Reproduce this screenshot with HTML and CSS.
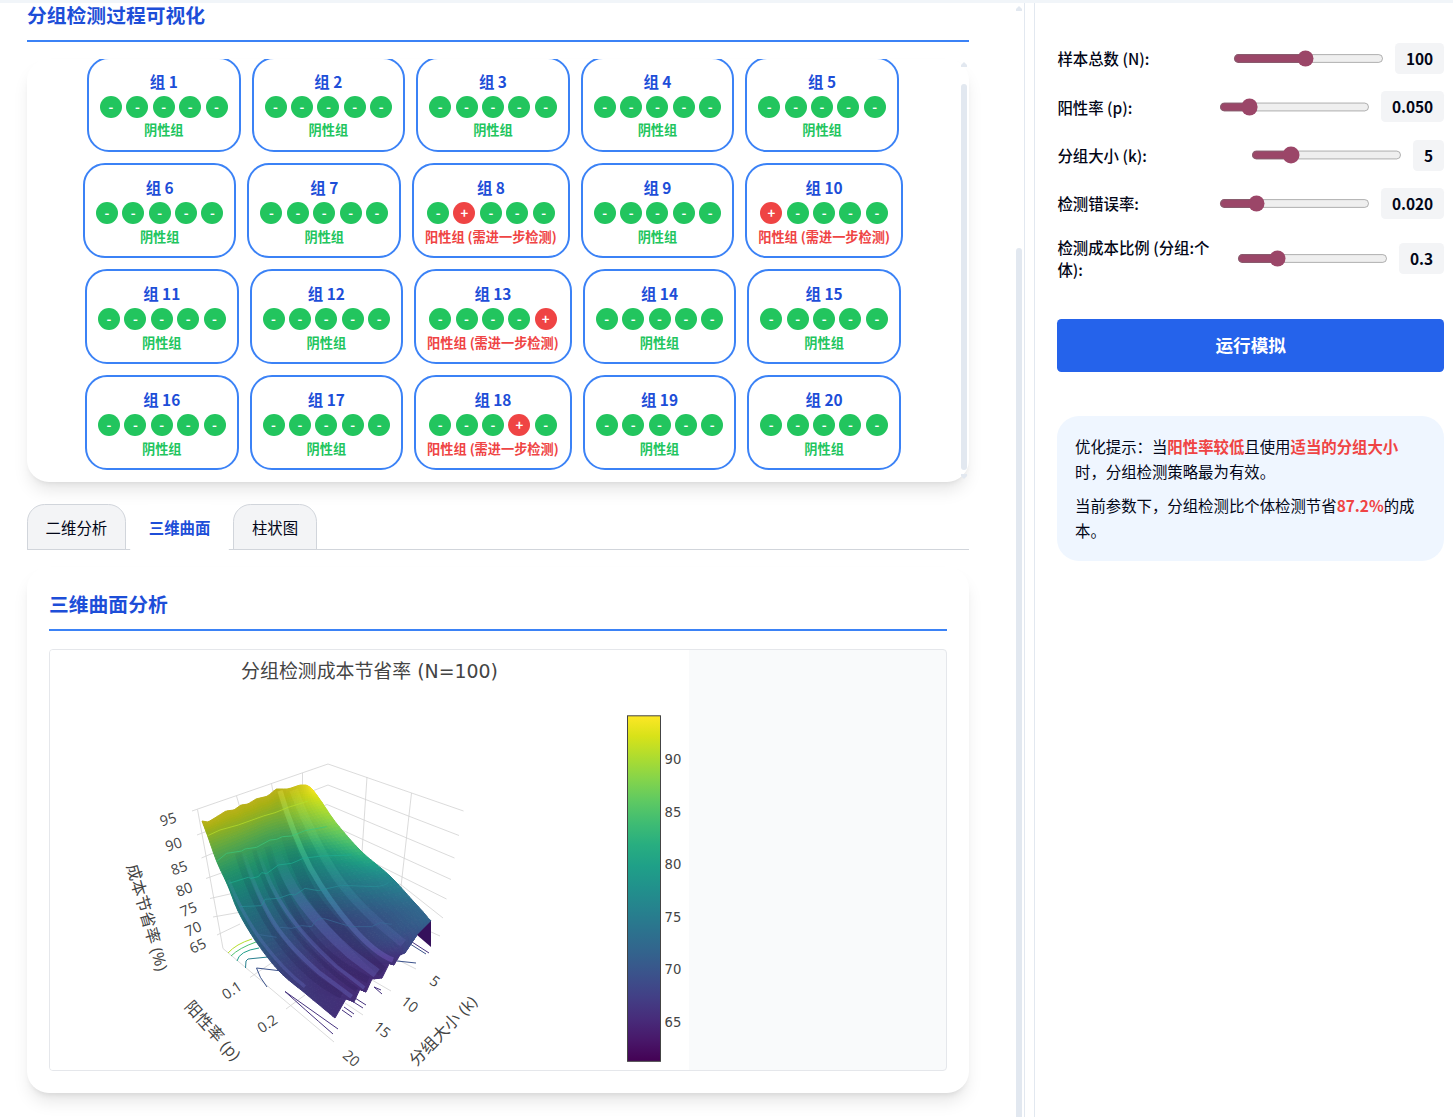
FILE: index.html
```html
<!DOCTYPE html>
<html lang="zh-CN">
<head>
<meta charset="utf-8">
<title>分组检测</title>
<link rel="stylesheet" href="styles.css">
</head>
<body>
<div class="topbar"></div>
<div class="layout">
  <main class="main">
    <div class="content">
      <h2 class="heading">分组检测过程可视化</h2>
      <section class="viewer">
        <div class="groups" id="groups"></div>
        <div class="bar"><i class="arrow"></i><i class="thumb"></i><i class="arrow down"></i></div>
      </section>
      <nav class="tabs">
        <a class="tab">二维分析</a><a class="tab active">三维曲面</a><a class="tab">柱状图</a>
      </nav>
      <section class="panel">
        <h2 class="heading">三维曲面分析</h2>
        <div class="chart">
          <svg class="plot" viewBox="50 650 639 420" width="639" height="420">
            <defs>
              <linearGradient id="viridis" x1="0" y1="1" x2="0" y2="0">
                <stop offset="0" stop-color="#440154"/><stop offset=".0627" stop-color="#48186a"/><stop offset=".1255" stop-color="#472d7b"/><stop offset=".1882" stop-color="#424086"/><stop offset=".251" stop-color="#3b528b"/><stop offset=".3137" stop-color="#33638d"/><stop offset=".3765" stop-color="#2c728e"/><stop offset=".4392" stop-color="#26828e"/><stop offset=".502" stop-color="#21918c"/><stop offset=".5647" stop-color="#1fa088"/><stop offset=".6275" stop-color="#28ae80"/><stop offset=".6902" stop-color="#3fbc73"/><stop offset=".7529" stop-color="#5ec962"/><stop offset=".8157" stop-color="#84d44b"/><stop offset=".8784" stop-color="#addc30"/><stop offset=".9412" stop-color="#d8e219"/><stop offset="1" stop-color="#fde725"/>
              </linearGradient>
              <linearGradient id="fade" gradientUnits="userSpaceOnUse" x1="0" y1="200" x2="0" y2="380">
                <stop offset="0" stop-color="#6cc8c8" stop-opacity="0"/><stop offset="1" stop-color="#7f8cf0" stop-opacity="1"/>
              </linearGradient>
              <linearGradient id="shadow" gradientUnits="userSpaceOnUse" x1="0" y1="120" x2="0" y2="420">
                <stop offset="0" stop-color="#0a1838" stop-opacity="0"/><stop offset="1" stop-color="#1a1040" stop-opacity=".16"/>
              </linearGradient>
              <linearGradient id="glow" gradientUnits="userSpaceOnUse" x1="0" y1="20" x2="0" y2="550">
                <stop offset="0" stop-color="#fff04a"/><stop offset=".3" stop-color="#6cffa0"/><stop offset=".6" stop-color="#58c8e8"/><stop offset="1" stop-color="#9a6cf0"/>
              </linearGradient>
            </defs>
            <text class="plot-title" x="369.5" y="678" text-anchor="middle">分组检测成本节省率 (N=100)</text>
            <g class="grid">
              <path d="M192 811L328 764L463.500 811M197 835L328 785L459 835.500M201.500 858L327 804.500L454.500 858M206 878.500L342 830L451 879.500M210 898.500L372 862L446.500 899M213 917L400 884L443 918M217 935L240 924M420 927L440 936"/>
              <path d="M197.500 809.500L223 948.500L334 1042M236.500 796L240 808M271.500 783.500L273 792M302.500 773L302.500 786M367 777L362 852M411.500 793L400.500 891"/>
              <path d="M250 977.500L276 960M286 1009L305 995M398 960L416 969M372 980L391 991M345 1003L363 1015"/>
            </g>
            <g class="floor">
              <path stroke="#b5de2b" d="M228 953Q236 944 252 939"/>
              <path stroke="#4ac16d" d="M231 956Q239 948 256 942"/>
              <path stroke="#1f9e89" d="M237 961Q239 951 259 948"/>
              <path stroke="#277f8e" d="M245.500 968L246 961L248 959L268 957"/>
              <path stroke="#3b528b" d="M267 987Q259 977 256.500 968L282 971M411 944.500L426 954M397 961L416 963"/>
              <path stroke="#46327e" d="M333 1034Q302 1007 285 991.500L338 1029M412 942L429 953M374 987L382 994M374 987L381 990M355 998L366 1005M352 1001L363 1008M344 1007L354 1014M342 1010L352 1017"/>
            </g>
            <g id="surface"></g>
            <path fill="#35105b" d="M431 921L431 947L417 935Z"/>
            <g transform="translate(195 780) scale(.3333)">
              <g class="dark">
                <path stroke-width="34" d="M262 120Q290 240 350 345Q430 455 562 575"/>
                <path stroke-width="22" d="M218 200Q250 320 320 430T520 600"/>
                <path stroke-width="14" d="M178 210Q212 340 290 445T486 630"/>
                <path stroke-width="22" d="M130 220Q170 360 250 475T440 645"/>
              </g>
              <g class="light">
                <path stroke="url(#glow)" opacity=".28" stroke-width="16" d="M255 32Q295 165 345 262Q400 360 470 440T594 540"/>
                <path stroke="url(#glow)" opacity=".12" stroke-width="26" d="M296 30Q360 195 425 290T625 490"/>
                <path stroke="url(#fade)" opacity=".22" stroke-width="30" d="M235 190Q265 290 325 370T465 520L545 580"/>
                <path stroke="url(#fade)" opacity=".24" stroke-width="11" d="M190 215Q222 318 275 395T425 560L508 624"/>
                <path stroke="url(#fade)" opacity=".24" stroke-width="13" d="M145 220Q180 330 225 410T375 580L470 650"/>
                <path stroke="url(#fade)" opacity=".2" stroke-width="10" d="M100 300Q145 410 205 490T330 620"/>
              </g>
              <g class="surface-lines">
                <path stroke="#b9e02c" d="M38 167L75 150L130 135L205 108L240 98L280 82L340 63"/>
                <path stroke="#3cc87c" d="M64 245L95 220L140 213L150 207L185 202L225 180L245 178L262 170L290 168L330 152L395 140"/>
                <path stroke="#1fae92" d="M102 310L160 292L168 295L190 290L200 278L215 281L250 255L290 250L325 235L380 228L470 225"/>
                <path stroke="#278f98" d="M135 380L200 377L210 358L250 355L285 343L300 345L330 325L370 332L440 316L540 320Q570 318 580 308"/>
                <path stroke="#3a6a98" d="M180 462L245 472M255 442L290 445L320 437L350 440Q365 412 385 415L440 432L470 440L530 440L555 428L590 433"/>
              </g>
            </g>
            <g class="ticks3d">
              <text transform="translate(168 819) rotate(-16)">95</text>
              <text transform="translate(173.500 844) rotate(-18)">90</text>
              <text transform="translate(179 867.500) rotate(-19)">85</text>
              <text transform="translate(184 889) rotate(-21)">80</text>
              <text transform="translate(188.500 909) rotate(-22)">75</text>
              <text transform="translate(193 928.500) rotate(-24)">70</text>
              <text transform="translate(197.500 945.500) rotate(-26)">65</text>
              <text transform="translate(231.500 990) rotate(-34)">0.1</text>
              <text transform="translate(267 1023.500) rotate(-34)">0.2</text>
              <text transform="translate(435 981) rotate(36)">5</text>
              <text transform="translate(410 1004) rotate(37)">10</text>
              <text transform="translate(382.500 1029.500) rotate(39)">15</text>
              <text transform="translate(351.500 1058) rotate(41)">20</text>
              <text class="axis" transform="translate(147.500 917.500) rotate(74)">成本节省率 (%)</text>
              <text class="axis" transform="translate(213 1030.500) rotate(48)">阳性率 (p)</text>
              <text class="axis" transform="translate(443 1030.500) rotate(-46)">分组大小 (k)</text>
            </g>
            <rect x="627.500" y="715.800" width="33" height="345.500" fill="url(#viridis)" stroke="#444"/>
            <g class="scale">
              <text x="664.500" y="764">90</text><text x="664.500" y="817">85</text><text x="664.500" y="869">80</text><text x="664.500" y="922">75</text><text x="664.500" y="974">70</text><text x="664.500" y="1027">65</text>
            </g>
          </svg>
        </div>
      </section>
    </div>
    <div class="bar page-bar"><i class="arrow"></i><i class="thumb"></i></div>
  </main>
  <aside class="side">
    <div class="row"><label class="name">样本总数 (N):</label><div class="control"><input class="range" type="range" min="0" max="1000" value="475"><span class="value">100</span></div></div>
    <div class="row"><label class="name">阳性率 (p):</label><div class="control"><input class="range" type="range" min="0" max="1000" value="161"><span class="value">0.050</span></div></div>
    <div class="row"><label class="name">分组大小 (k):</label><div class="control"><input class="range" type="range" min="0" max="1000" value="230"><span class="value">5</span></div></div>
    <div class="row"><label class="name">检测错误率:</label><div class="control"><input class="range" type="range" min="0" max="1000" value="215"><span class="value">0.020</span></div></div>
    <div class="row"><label class="name">检测成本比例 (分组:个体):</label><div class="control"><input class="range" type="range" min="0" max="1000" value="237"><span class="value">0.3</span></div></div>
    <button class="run">运行模拟</button>
    <div class="tip">
      <p>优化提示：当<b>阳性率较低</b>且使用<b>适当的分组大小</b>时，分组检测策略最为有效。</p>
      <p>当前参数下，分组检测比个体检测节省<b>87.2%</b>的成本。</p>
    </div>
  </aside>
</div>
<script src="app.js"></script>
</body>
</html>
```
FILE: styles.css
```css
* { box-sizing: border-box; }
body { margin: 0; height: 1117px; overflow: hidden; background: #fff; color: #020617; font: 15.4px/1.6 "Noto Sans CJK SC", sans-serif; }
.topbar { height: 3px; background: #f1f5f9; }
.layout { display: flex; gap: 9px; height: 1114px; }
.main { width: 1025px; flex: none; display: flex; justify-content: space-between; border-right: 1px solid #e2e8f0; overflow: hidden; }
.content { width: 942px; margin-left: 27px; flex: none; }
.heading { margin: 0; font-size: 19.8px; font-weight: 600; line-height: 30px; color: #1d4ed8; border-bottom: 2px solid #3b82f6; }
.content > .heading { height: 39px; line-height: 24px; }
.viewer { display: flex; height: 423px; margin-top: 17px; border-radius: 22px; box-shadow: 0 11px 16.5px -3.3px rgba(0,0,0,.1), 0 4.4px 6.6px -4.4px rgba(0,0,0,.1); }
.groups { flex: 1; display: flex; flex-wrap: wrap; align-content: flex-start; justify-content: center; gap: 11px; padding: 0 11.2px 0 11px; margin-top: -2.4px; clip-path: inset(2.4px 0 0 0); }
.group { height: 95.2px; padding: 11px; border: 2px solid #3b82f6; border-radius: 22px; text-align: center; background: #fff; }
.group-name { height: 26.2px; line-height: 22.6px; font-weight: 600; color: #1d4ed8; }
.samples { display: flex; justify-content: center; gap: 4.4px; }
.sample { width: 22px; height: 22px; border-radius: 50%; background: #22c55e; color: #fff; font-size: 13.2px; font-weight: 700; line-height: 22px; }
.sample.positive { background: #ef4444; }
.status { margin-top: 3.6px; font-size: 13.2px; font-weight: 700; line-height: 17px; color: #22c55e; }
.status.positive { color: #ef4444; }
.bar { width: 10px; display: flex; flex-direction: column; align-items: center; padding: 3px 0; }
.arrow { width: 6px; height: 5px; background: #e2e8f0; clip-path: polygon(50% 0, 100% 60%, 100% 100%, 0 100%, 0 60%); flex: none; }
.down { transform: rotate(180deg); }
.thumb { width: 6px; flex: 1; margin: 17px 0 4px; border-radius: 3px; background: #e2e8f0; }
.page-bar .thumb { margin: 237px 0 -10px; }
.tabs { display: flex; gap: 4.4px; margin-top: 22px; height: 46px; box-shadow: inset 0 -1px #d1d5db; }
.tab { padding: 0 17.6px; border: 1px solid #d1d5db; border-radius: 17.6px 17.6px 0 0; background: #f3f4f6; line-height: 44px; }
.tab.active { border-color: #fff; background: #fff; color: #1d4ed8; font-weight: 700; }
.panel { height: 526px; margin-top: 17px; padding: 22px 22px 0; border-radius: 22px; box-shadow: 0 11px 16.5px -3.3px rgba(0,0,0,.1), 0 4.4px 6.6px -4.4px rgba(0,0,0,.1); }
.panel .heading { height: 42px; }
.chart { height: 422px; margin-top: 18px; border: 1px solid #e5e7eb; border-radius: 4px; background: #f9fafb; overflow: hidden; }
.plot { display: block; background: #fff; }
.plot text { fill: #444; font-family: "DejaVu Sans", "Noto Sans CJK SC", sans-serif; }
.plot .plot-title { font-size: 18.9px; }
.plot .ticks3d text { font: 14.5px "Open Sans", "Noto Sans CJK SC", sans-serif; text-anchor: middle; dominant-baseline: central; }
.plot .ticks3d .axis { font-size: 16.2px; letter-spacing: .3px; }
.plot .scale text { font-size: 13.2px; }
.grid { fill: none; stroke: #d2d2d2; stroke-width: .8; }
.floor { fill: none; stroke-width: 1; }
.dark, .light { fill: none; }
.dark { stroke: url(#shadow); }
.surface-lines { fill: none; stroke-width: 3; opacity: .7; }
.side { flex: 1; min-width: 0; border-left: 1px solid #e2e8f0; padding: 40px 9px 0 22.4px; }
.row { display: flex; align-items: center; justify-content: space-between; margin-bottom: 17.6px; min-height: 30.8px; }
.name { width: 156px; font-weight: 500; line-height: 22px; margin-top: -.4px; }
.control { display: flex; align-items: center; gap: 11px; }
.range { zoom: 1.1; width: 137.3px; margin: 0; accent-color: #9b4668; }
.value { height: 30.8px; padding: 0 10.8px; border-radius: 4.4px; background: #f3f4f6; font-weight: 600; line-height: 31px; }
.run { display: block; width: 100%; height: 53px; margin-top: 39px; padding: 0 0 1.5px; border: 0; border-radius: 4.4px; background: #2563eb; color: #fff; font: 700 17.6px "Noto Sans CJK SC", sans-serif; }
.tip { margin-top: 44px; padding: 17.4px 17.6px 17.8px; border-radius: 22px; background: #eff6ff; line-height: 25.2px; }
.tip p { margin: 0 0 8.6px; }
.tip p:last-child { margin: 0; }
.tip b { color: #ef4444; font-weight: 700; }
```
FILE: app.js
```js
// Group cards: index of the positive sample for each positive group.
const positives = { 8: 1, 10: 0, 13: 4, 18: 3 };
let cards = '';
for (let n = 1; n <= 20; n++) {
  const hit = positives[n];
  let samples = '';
  for (let i = 0; i < 5; i++) samples += `<span class="sample${i === hit ? ' positive' : ''}">${i === hit ? '+' : '-'}</span>`;
  cards += `<div class="group"><div class="group-name">组 ${n}</div><div class="samples">${samples}</div>` +
    (hit === undefined ? '<div class="status">阴性组</div>' : '<div class="status positive">阳性组 (需进一步检测)</div>') + '</div>';
}
document.getElementById('groups').innerHTML = cards;

// Surface mesh: rows follow the infection rate, columns follow the group size.
const rows = [
  [[202,821],[230,809],[258,797],[276,789],[313,790]],
  [[208,837],[238,826],[265,815],[289,808],[321,801]],
  [[217,862],[245,850],[275,838],[303,832],[337,824]],
  [[228,886],[252,877],[282,864],[318,857],[362,852]],
  [[239,913],[264,905],[296,891],[337,886],[390,876]],
  [[257,943],[281,934],[312,919],[361,917],[414,902]],
  [[280,972],[306,962],[336,949],[382,940],[424,913]],
  [[306,994],[330,982],[354,965],[392,953],[428,918]],
  [[335,1018],[354,1001],[372,979],[394,965],[431,921]]
];
const levels = [
  [93.5,93.5,93.5,93.5,94],[90,90,90,90,91.5],[85,85,85,86,88],[80,80,80,80,83],[76,75,75,75,77],
  [72,71,70,70,73],[68.5,67.5,67,69,72],[67,66,66,67,72],[66,65.5,65.5,66.5,71]
];
const ramp = ['440154','48186a','472d7b','424086','3b528b','33638d','2c728e','26828e','21918c','1fa088','28ae80','3fbc73','5ec962','84d44b','addc30','d8e219','fde725']
  .map(h => [0, 2, 4].map(i => parseInt(h.substr(i, 2), 16)));
const spline = (v, u) => {
  const n = v.length - 1, i = Math.min(n - 1, Math.floor(u)), f = u - i;
  const a = v[Math.max(0, i - 1)], b = v[i], c = v[i + 1], d = v[Math.min(n, i + 2)];
  return b + .5 * f * (c - a + f * (2 * a - 5 * b + 4 * c - d + f * (3 * (b - c) + d - a)));
};
const back = [[202,821],[208,822],[218,816],[226,811],[234,810],[241,805],[248,804],[256,799],[268,796],[276,789],[288,789],[300,785],[306,785],[310,787],[313,790]];
const front = [[335,1018],[347,997],[354,1002],[360,989],[366,992],[372,979],[382,978],[390,962],[394,965],[400,955],[405,953],[417,935],[431,921]];
const along = (pts, s, k) => spline(pts.map(p => p[k]), s * (pts.length - 1));
const lin = (pts, s, k) => { const x = s * (pts.length - 1), i = Math.min(pts.length - 2, Math.floor(x)); return pts[i][k] + (x - i) * (pts[i + 1][k] - pts[i][k]); };
const S = 48, T = 72;
const mesh = [];
for (let i = 0; i <= S; i++) {
  const s = i / S;
  const guide = [0, 1].map(k => {
    const line = rows.map(r => along(r, s, k));
    line[0] = lin(back, s, k);
    line[8] = lin(front, s, k);
    return line;
  });
  mesh.push(Array.from({ length: T + 1 }, (_, j) => guide.map(line => spline(line, j / T * 8).toFixed(1)).join(' ')));
}
// Shading: the slope faces away on the large-group side and catches light near k = 1.
const shadeAt = (s, t) => {
  const lit = Math.max(0, Math.min(1, (s - .66) / .3));
  return .77 + .22 * lit + .18 * t * (1 - lit);
};
let out = '';
for (let i = 0; i < S; i++) for (let j = 0; j < T; j++) {
  const s = (i + .5) / S, t = (j + .5) / T;
  const value = spline(levels.map(r => spline(r, s * 4)), t * 8);
  const u = Math.max(0, Math.min(15.99, (value - 61.3) / 32.8 * 16)), a = Math.floor(u), shade = shadeAt(s, t);
  const rgb = ramp[a].map((c, k) => Math.round((c + (u - a) * (ramp[a + 1][k] - c)) * shade));
  const col = `rgb(${rgb})`;
  out += `<path d="M${mesh[i][j]}L${mesh[i + 1][j]}L${mesh[i + 1][j + 1]}L${mesh[i][j + 1]}Z" fill="${col}" stroke="${col}" stroke-width="1"/>`;
}
document.getElementById('surface').innerHTML = out;
```
